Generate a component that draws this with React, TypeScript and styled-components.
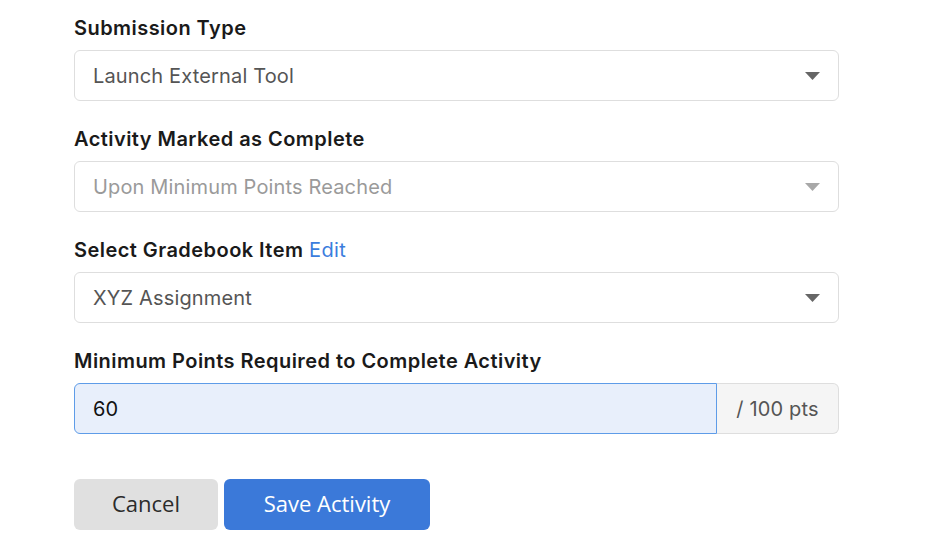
import React from "react";
import styled, { createGlobalStyle } from "styled-components";

const Global = createGlobalStyle`
  html, body { margin: 0; padding: 0; background: #fff; }
  body { font-family: Inter, "Noto Sans", sans-serif; }
`;

const Form = styled.div`
  width: 765px;
  margin-left: 74px;
  padding-top: 16px;
  display: flex;
  flex-direction: column;
`;

const Field = styled.div`
  display: flex;
  flex-direction: column;
  margin-bottom: 26px;
`;

const Label = styled.div`
  font-family: Inter, sans-serif;
  font-weight: 600;
  font-size: 20px;
  line-height: 24px;
  color: #1a1a1a;
  margin-bottom: 10px;
  letter-spacing: 0.45px;
`;

const EditLink = styled.a`
  color: #3b7ddd;
  font-weight: 400;
  text-decoration: none;
  cursor: pointer;
`;

const Select = styled.div<{ $disabled?: boolean }>`
  box-sizing: border-box;
  height: 51px;
  border: 1px solid #dedede;
  border-radius: 6px;
  display: flex;
  align-items: center;
  justify-content: space-between;
  padding: 0 18px 0 18px;
  font-family: Inter, sans-serif;
  font-size: 20px;
  letter-spacing: 0.15px;
  color: ${(p) => (p.$disabled ? "#9a9a9a" : "#555")};
  background: #fff;
`;

const Caret = styled.svg`
  width: 15px;
  height: 8px;
  flex: none;
`;

const InputGroup = styled.div`
  display: flex;
  height: 51px;
`;

const NumberBox = styled.div`
  box-sizing: border-box;
  flex: 1;
  background: #e8effb;
  border: 1px solid #5e9ce8;
  border-radius: 6px 0 0 6px;
  display: flex;
  align-items: center;
  padding-left: 18px;
  font-family: Inter, sans-serif;
  font-size: 20px;
  letter-spacing: 0.15px;
  color: #111;
`;

const Addon = styled.div`
  box-sizing: border-box;
  width: 122px;
  background: #f5f5f5;
  border: 1px solid #dedede;
  border-left: none;
  border-radius: 0 6px 6px 0;
  display: flex;
  align-items: center;
  justify-content: center;
  font-family: Inter, sans-serif;
  font-size: 20px;
  letter-spacing: 0.15px;
  color: #555;
`;

const Actions = styled.div`
  display: flex;
  gap: 6px;
  margin-top: 19px;
`;

const Button = styled.button<{ $primary?: boolean }>`
  box-sizing: border-box;
  height: 51px;
  border: none;
  border-radius: 6px;
  font-family: "Open Sans", "Noto Sans", sans-serif;
  font-weight: 500;
  font-size: 22px;
  padding: 0 0 4px 0;
  width: ${(p) => (p.$primary ? "206px" : "144px")};
  background: ${(p) => (p.$primary ? "#3b79d9" : "#e0e0e0")};
  color: ${(p) => (p.$primary ? "#fff" : "#2b2b2b")};
`;

const Arrow = ({ color }: { color: string }) => (
  <Caret viewBox="0 0 15 8">
    <polygon points="0,0 15,0 7.5,8" fill={color} />
  </Caret>
);

export default function App() {
  return (
    <>
      <Global />
      <Form>
        <Field>
          <Label>Submission Type</Label>
          <Select>
            <span>Launch External Tool</span>
            <Arrow color="#666" />
          </Select>
        </Field>
        <Field>
          <Label>Activity Marked as Complete</Label>
          <Select $disabled>
            <span>Upon Minimum Points Reached</span>
            <Arrow color="#a8a8a8" />
          </Select>
        </Field>
        <Field>
          <Label>
            Select Gradebook Item <EditLink>Edit</EditLink>
          </Label>
          <Select>
            <span>XYZ Assignment</span>
            <Arrow color="#666" />
          </Select>
        </Field>
        <Field>
          <Label>Minimum Points Required to Complete Activity</Label>
          <InputGroup>
            <NumberBox>60</NumberBox>
            <Addon>/ 100 pts</Addon>
          </InputGroup>
        </Field>
        <Actions>
          <Button>Cancel</Button>
          <Button $primary>Save Activity</Button>
        </Actions>
      </Form>
    </>
  );
}
